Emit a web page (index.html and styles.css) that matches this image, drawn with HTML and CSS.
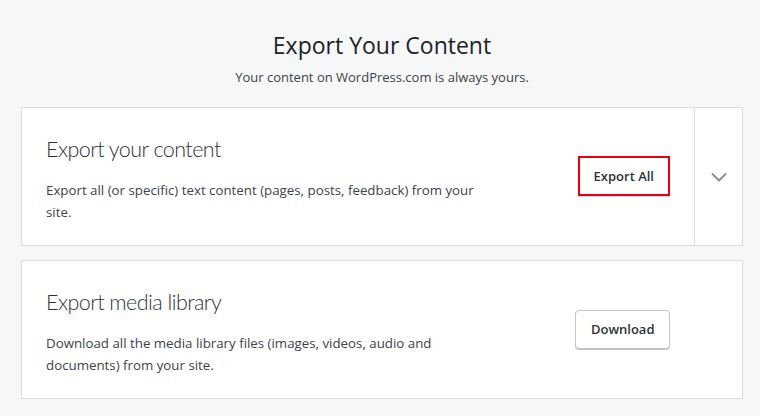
FILE: index.html
```html
<!DOCTYPE html>
<html lang="en">
<head>
<meta charset="utf-8">
<title>Export Your Content</title>
<link rel="stylesheet" href="styles.css">
</head>
<body>
<main class="page">
  <header class="intro">
    <h1 class="intro-title">Export Your Content</h1>
    <p class="intro-sub">Your content on WordPress.com is always yours.</p>
  </header>

  <section class="card card-split">
    <div class="card-main">
      <div class="card-text">
        <h2 class="card-title">Export your content</h2>
        <p class="card-desc">Export all (or specific) text content (pages, posts, feedback) from your site.</p>
      </div>
      <button class="btn btn-highlight" type="button">Export All</button>
    </div>
    <div class="card-toggle">
      <svg class="chevron" width="18" height="18" viewBox="0 0 18 18" aria-hidden="true">
        <path d="M2 5.5 L9 12.5 L16 5.5" fill="none" stroke="#8c8f94" stroke-width="2"/>
      </svg>
    </div>
  </section>

  <section class="card card-media">
    <div class="card-main">
      <div class="card-text">
        <h2 class="card-title">Export media library</h2>
        <p class="card-desc">Download all the media library files (images, videos, audio and documents) from your site.</p>
      </div>
      <button class="btn" type="button">Download</button>
    </div>
  </section>
</main>
</body>
</html>
```

FILE: styles.css
```css
* { box-sizing: border-box; }

html, body {
  margin: 0;
  padding: 0;
  background: #f6f7f7;
}

body {
  font-family: "Open Sans", "Noto Sans", "Liberation Sans", sans-serif;
  color: #2c3338;
}

.page {
  padding: 0 17px 0 21px;
  display: flex;
  flex-direction: column;
}

.intro {
  text-align: center;
  padding-top: 29px;
  margin-bottom: 20px;
}

.intro-title {
  margin: 0;
  font-size: 23px;
  font-weight: 400;
  line-height: 32px;
  color: #1d2327;
}

.intro-sub {
  margin: 6px 0 0;
  font-size: 13px;
  line-height: 20px;
  color: #3c434a;
}

.card {
  background: #fff;
  border: 1px solid #dcdcde;
  display: flex;
  min-height: 139px;
}

.card + .card {
  margin-top: 14px;
}

.card-main {
  flex: 1;
  display: flex;
  align-items: center;
  justify-content: space-between;
  padding: 25px 24px 22px 24px;
}

.card-media .card-main {
  padding-right: 72px;
}

.card-title {
  margin: 0;
  font-family: "Lato", "Open Sans", sans-serif;
  font-size: 21.5px;
  letter-spacing: -0.55px;
  font-weight: 300;
  line-height: 30px;
  color: #2c3338;
}

.card-desc {
  margin: 15px 0 0;
  font-size: 13.3px;
  line-height: 22px;
  color: #3c434a;
  max-width: 440px;
}

.btn {
  font-family: inherit;
  font-size: 13px;
  font-weight: 600;
  color: #2c3338;
  background: #fff;
  border: 1px solid #c3c4c7;
  border-radius: 4px;
  box-shadow: 0 1px 0 #c3c4c7;
  height: 39px;
  padding: 0 14.5px;
  margin-bottom: 4px;
  cursor: pointer;
}

.btn-highlight {
  border: 2px solid #e60012;
  border-radius: 0;
  height: 40px;
  padding: 0 14px;
  margin-bottom: 5px;
  box-shadow: 0 1px 1px rgba(0,0,0,0.15);
}

.card-toggle {
  width: 48px;
  border-left: 1px solid #dcdcde;
  display: flex;
  align-items: center;
  justify-content: center;
}

.chevron {
  display: block;
}
```
